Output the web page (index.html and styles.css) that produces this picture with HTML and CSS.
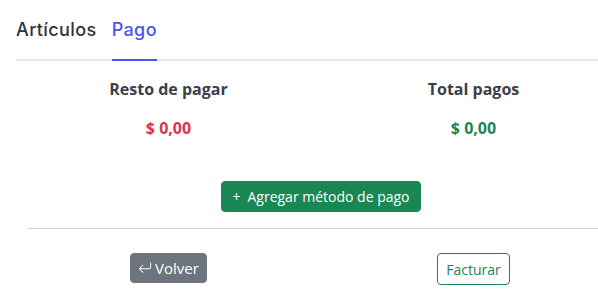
FILE: index.html
```html
<!DOCTYPE html>
<html lang="es">
<head>
<meta charset="utf-8">
<title>Pago</title>
<link rel="stylesheet" href="styles.css">
</head>
<body>
<div class="page">
  <nav class="tabs">
    <a class="tab">Artículos</a>
    <a class="tab active">Pago</a>
  </nav>
  <div class="content">
    <div class="totals">
      <div class="total">
        <div class="label">Resto de pagar</div>
        <div class="amount red">$ 0,00</div>
      </div>
      <div class="total">
        <div class="label">Total pagos</div>
        <div class="amount green">$ 0,00</div>
      </div>
    </div>
    <div class="add-row">
      <button class="btn btn-success"><span class="plus">+</span>Agregar método de pago</button>
    </div>
    <hr class="sep">
    <div class="actions">
      <div class="action">
        <button class="btn btn-secondary">
          <svg class="ret" viewBox="0 0 16 16" width="14" height="14" aria-hidden="true"><path fill="currentColor" d="M14.5 1.5a.5.5 0 0 1 .5.5v4.8a2.5 2.5 0 0 1-2.5 2.5H2.707l3.347 3.346a.5.5 0 0 1-.708.708l-4.2-4.2a.5.5 0 0 1 0-.708l4-4a.5.5 0 1 1 .708.708L2.707 8.3H12.5A1.5 1.5 0 0 0 14 6.8V2a.5.5 0 0 1 .5-.5z"/></svg>Volver
        </button>
      </div>
      <div class="action"><button class="btn btn-outline">Facturar</button></div>
    </div>
  </div>
</div>
</body>
</html>
```
FILE: styles.css
```css
html, body {
  margin: 0;
  padding: 0;
  overflow: hidden;
  background: #fff;
}
body {
  font-family: "Open Sans", "Noto Sans", sans-serif;
  color: #3b3f4a;
}
.page {
  width: 610px;
  padding-left: 16px;
}
.tabs {
  display: flex;
  gap: 15px;
  border-bottom: 2px solid #e6e9f0;
  padding-top: 16px;
}
.tab {
  font-family: "Inter", "Lato", sans-serif;
  font-weight: 500;
  font-size: 18px;
  line-height: 28px;
  color: #2f3340;
  padding-bottom: 15px;
  margin-bottom: -2px;
  border-bottom: 2px solid transparent;
  letter-spacing: 0.4px;
}
.tab.active {
  color: #4558ea;
  border-bottom-color: #4558ea;
}
.totals {
  display: flex;
  margin-top: 16px;
}
.total {
  flex: 1;
  text-align: center;
}
.label {
  font-weight: 700;
  font-size: 16px;
  line-height: 24px;
  color: #3b3f4a;
}
.amount {
  font-weight: 700;
  font-size: 16px;
  line-height: 22px;
  margin-top: 16px;
}
.red { color: #e0314f; }
.green { color: #1a8754; }
.add-row {
  display: flex;
  justify-content: center;
  margin-top: 42px;
}
.btn {
  font-family: "Open Sans", "Noto Sans", sans-serif;
  font-size: 14px;
  line-height: 21px;
  height: 31px;
  box-sizing: border-box;
  border-radius: 4px;
  border: 1px solid transparent;
  padding: 0 9px;
  cursor: pointer;
  display: inline-flex;
  align-items: center;
}
.btn-success {
  background: #198754;
  border-color: #198754;
  color: #fff;
  padding: 0 10px;
}
.plus {
  margin-right: 7px;
}
.sep {
  margin: 16px 0 0 12px;
  border: 0;
  border-top: 1px solid #d5d5d5;
}
.actions {
  display: flex;
  margin-top: 24px;
}
.action {
  flex: 1;
  display: flex;
  justify-content: center;
}
.btn-secondary {
  background: #6c757d;
  border-color: #6c757d;
  color: #fff;
  height: 30px;
  font-size: 15px;
  padding: 0 7px;
}
.ret {
  margin-right: 3px;
}
.btn-outline {
  background: #fff;
  border-color: #198754;
  color: #198754;
  height: 32px;
  padding: 0 8px;
}
```
